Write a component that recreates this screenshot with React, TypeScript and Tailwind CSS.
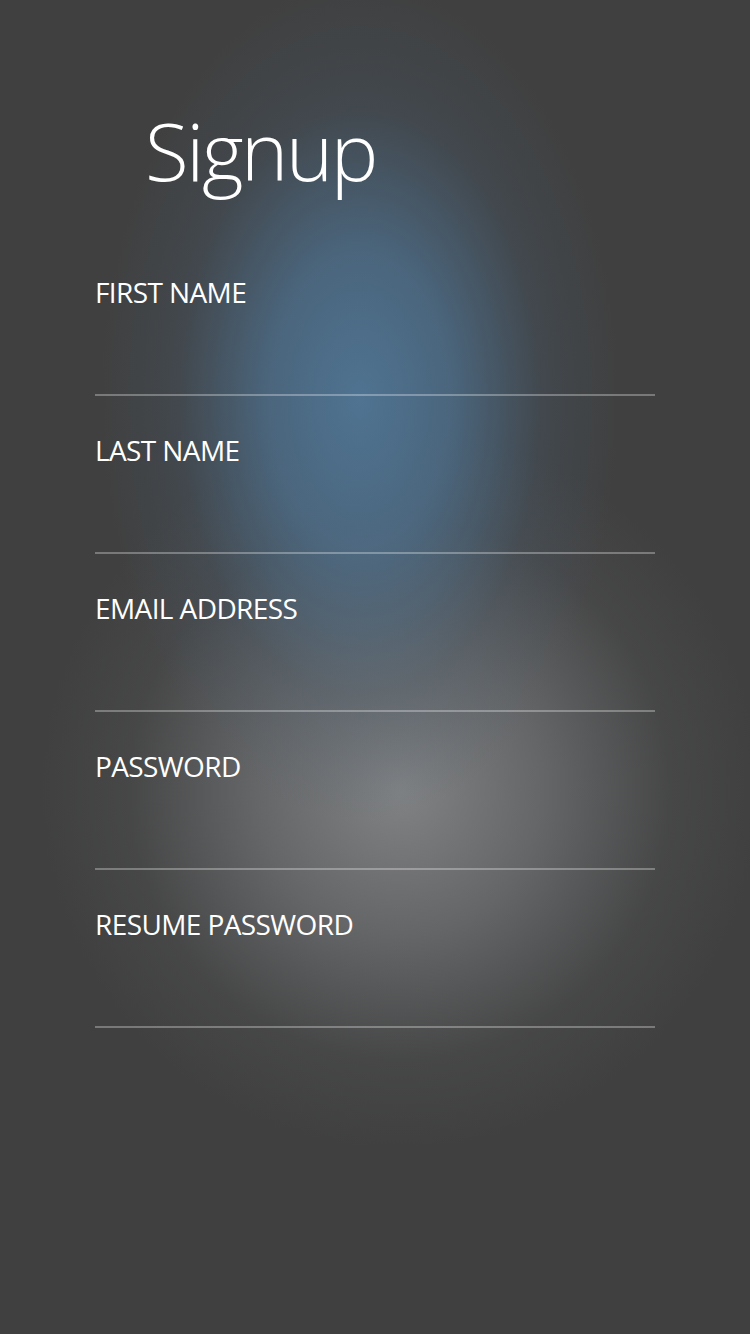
import React, { ReactElement } from 'react';

const fields = ['FIRST NAME', 'LAST NAME', 'EMAIL ADDRESS', 'PASSWORD', 'RESUME PASSWORD'];

const Field = ({ label }: { label: string }): ReactElement => (
  <div className="flex h-[158px] flex-col">
    <label className="mt-[34px] block text-[28px] leading-[40px] tracking-[-0.6px] text-white">{label}</label>
    <div className="flex-1" />
    <div className="h-[2px] w-full bg-white/30" />
  </div>
);

const App = (): ReactElement => (
  <div
    className="min-h-[1334px] w-[750px] bg-[#404040] bg-[radial-gradient(ellipse_260px_420px_at_360px_400px,rgba(80,118,150,0.95),rgba(78,114,145,0.75)_35%,rgba(70,90,108,0.3)_70%,rgba(64,64,64,0)_100%),radial-gradient(ellipse_360px_360px_at_400px_790px,rgba(132,134,136,0.95),rgba(120,122,124,0.65)_40%,rgba(90,92,94,0.25)_75%,rgba(64,64,64,0)_100%)] font-['Open_Sans',sans-serif]"
  >
    <h1 className="pl-[145px] pt-[95px] text-[80px] font-light leading-[110px] tracking-[-2.4px] text-white">Signup</h1>
    <form className="mx-[95px] mt-[33px] flex flex-col">
      {fields.map((f) => (
        <Field key={f} label={f} />
      ))}
    </form>
  </div>
);

export default App;
